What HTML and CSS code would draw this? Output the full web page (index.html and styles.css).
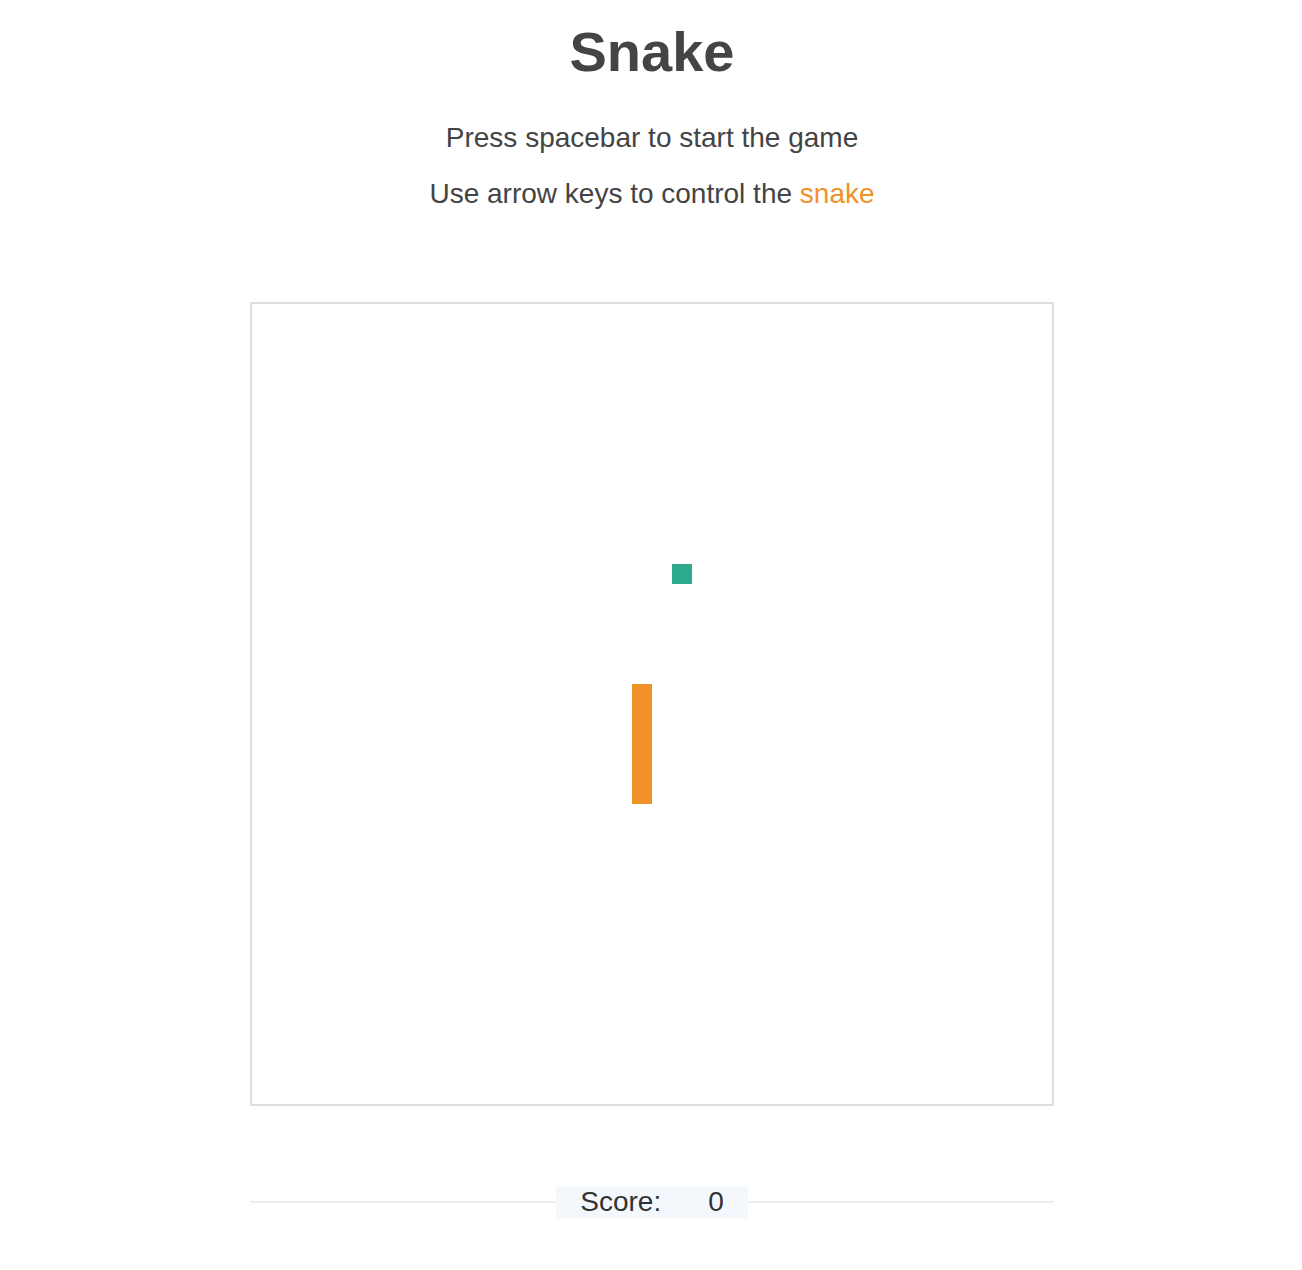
FILE: index.html
```html
<!DOCTYPE html>
<html>
<head>
<meta charset="utf-8">
<link rel="stylesheet" href="styles.css">
</head>
<body>
<div class="page">
  <h1 class="title">Snake</h1>
  <p class="hint">Press spacebar to start the game</p>
  <p class="hint">Use arrow keys to control the <span class="accent">snake</span></p>
  <div class="board">
    <div class="food" style="left:420px;top:260px"></div>
    <div class="snake" style="left:380px;top:380px;height:120px"></div>
  </div>
  <div class="score-row">
    <div class="score"><span class="score-label">Score:</span><span class="score-value">0</span></div>
  </div>
</div>
</body>
</html>
```
FILE: styles.css
```css
html, body {
  margin: 0;
  padding: 0;
  background: #fff;
}
body {
  font-family: "Liberation Sans", Arial, sans-serif;
  color: #444;
}
.page {
  display: flex;
  flex-direction: column;
  align-items: center;
  padding-left: 2px;
}
.title {
  margin: 19px 0 0;
  font-size: 56px;
  line-height: 66px;
  font-weight: bold;
  color: #444;
}
.hint {
  margin: 0;
  font-size: 28px;
  line-height: 56px;
}
.hint:first-of-type {
  margin-top: 25px;
}
.accent {
  color: #f0912a;
}
.board {
  position: relative;
  margin-top: 80px;
  width: 800px;
  height: 800px;
  border: 2px solid #dddddd;
}
.food, .snake {
  position: absolute;
  width: 20px;
  height: 20px;
}
.food {
  background: #2eaa8f;
}
.snake {
  background: #f0912a;
}
.score-row {
  margin-top: 80px;
  width: 804px;
  display: flex;
  justify-content: center;
  background: linear-gradient(#eeeeee, #eeeeee) 0 15px / 100% 2px no-repeat;
}
.score {
  width: 192px;
  height: 32px;
  background: #f4f8fd;
  display: flex;
  align-items: center;
  justify-content: center;
  font-size: 28px;
  color: #333;
}
.score-value {
  margin-left: 47px;
}
```
